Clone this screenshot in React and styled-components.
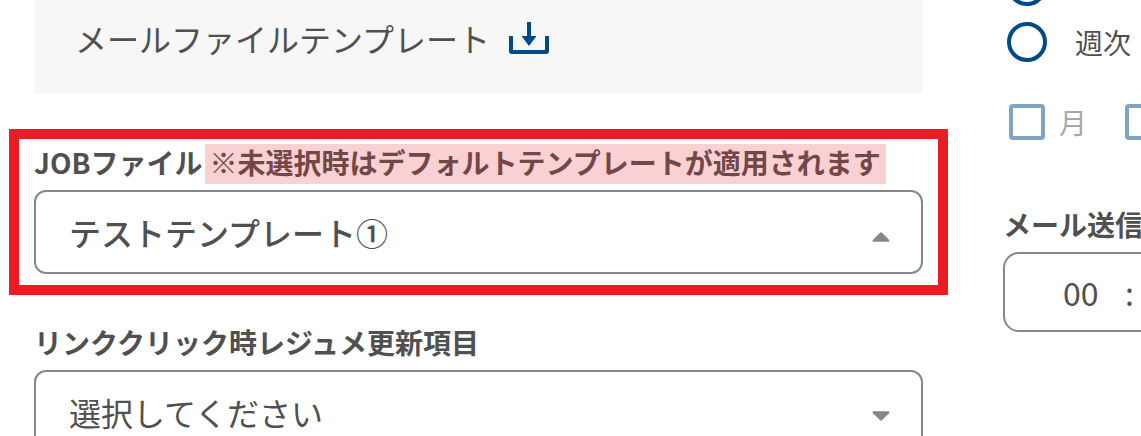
import React from "react";
import styled, { createGlobalStyle, ThemeProvider } from "styled-components";

const theme = {
  color: {
    text: "#505050",
    primary: "#004b87",
    border: "#878787",
    panel: "#f7f7f7",
    frame: "#ed1c24",
    mark: "#fad1d3",
    markText: "#734648",
  },
  fontSize: { m: "28px", l: "32px" },
};

const GlobalStyle = createGlobalStyle`
  * {
    box-sizing: border-box;
  }

  body {
    margin: 0;
    background: #fff;
    color: ${theme.color.text};
    font-family: "Noto Sans CJK JP", sans-serif;
    font-size: ${theme.fontSize.m};
    line-height: 36px;
  }

  select, button, input {
    margin: 0;
    padding: 0;
    color: inherit;
    font: inherit;
  }
`;

const Page = styled.main`
  display: grid;
  grid-template-columns: minmax(0, 34fr) minmax(0, 5fr);
  column-gap: 55px;
  height: 100vh;
  padding-left: 9px;
  overflow: hidden;
`;

const Side = styled.aside`
  overflow: hidden;
  white-space: nowrap;
`;

const Panel = styled.div`
  display: flex;
  align-items: center;
  gap: 19px;
  margin: 0 25px 35px;
  padding: 20px 41px 38px;
  background: ${({ theme: { color } }) => color.panel};
  font-size: ${({ theme: { fontSize } }) => fontSize.l};
`;

const DownloadButton = styled.button`
  display: flex;
  border: 0;
  background: none;
  color: ${({ theme: { color } }) => color.primary};
`;

const Frame = styled.div`
  padding: 5px 15px 11px;
  border: 10px solid ${({ theme: { color } }) => color.frame};
`;

const Section = styled.div`
  padding: 29px 25px;
`;

const FieldLabel = styled.label`
  display: flex;
  gap: 2px;
  height: 40px;
  margin-bottom: 6px;
  font-weight: 700;
  white-space: nowrap;
`;

const Note = styled.mark`
  padding: 0 5px;
  background: ${({ theme: { color } }) => color.mark};
  color: ${({ theme: { color } }) => color.markText};
`;

const SelectBox = styled.div`
  display: grid;
  align-items: center;

  > * {
    grid-area: 1 / 1;
  }

  svg {
    justify-self: end;
    margin-right: 33px;
    color: ${({ theme: { color } }) => color.border};
    pointer-events: none;
  }
`;

const Select = styled.select`
  width: 100%;
  height: 84px;
  padding: 0 60px 0 33px;
  border: 2px solid ${({ theme: { color } }) => color.border};
  border-radius: 12px;
  background: #fff;
  font-size: ${({ theme: { fontSize } }) => fontSize.l};
  font-weight: ${({ $filled }) => ($filled ? 500 : 400)};
  appearance: none;
`;

const RadioGroup = styled.div`
  display: grid;
  gap: 16px;
  margin: -34px 0 42px 4px;
`;

const RadioLabel = styled.label`
  display: flex;
  align-items: center;
  gap: 28px;
`;

const Radio = styled.input`
  flex: none;
  width: 40px;
  height: 40px;
  border: 4px solid ${({ theme: { color } }) => color.primary};
  border-radius: 50%;
  appearance: none;
`;

const Days = styled.div`
  display: flex;
  gap: 38px;
  margin: 0 0 66px 6px;
`;

const DayLabel = styled.label`
  display: flex;
  align-items: center;
  gap: 14px;
  height: 36px;
  opacity: 0.5;
`;

const Checkbox = styled.input`
  flex: none;
  width: 36px;
  height: 36px;
  border: 4px solid ${({ theme: { color } }) => color.primary};
  border-radius: 4px;
  appearance: none;
`;

const TimeBox = styled.div`
  display: flex;
  align-items: center;
  gap: 26px;
  width: 280px;
  height: 80px;
  padding-left: 58px;
  border: 2px solid ${({ theme: { color } }) => color.border};
  border-radius: 16px;
  font-size: ${({ theme: { fontSize } }) => fontSize.l};
`;

const TimeSelect = styled.select`
  border: 0;
  background: none;
  appearance: none;
`;

const DownloadIcon = () => (
  <svg width="40" height="32" viewBox="0 0 40 32" aria-hidden="true">
    <path
      d="M0 14h4v14h32V14h4v15a3 3 0 0 1-3 3H3a3 3 0 0 1-3-3z"
      fill="currentColor"
    />
    <path d="M18 0h4v14h5.500l-7.500 10l-7.500-10H18z" fill="currentColor" />
  </svg>
);

const Caret = ({ open }) => (
  <svg width="18" height="24" viewBox="0 0 18 24" aria-hidden="true">
    <path
      d={
        open
          ? "M8 12.800q1-.9 2 0l7 7q1.200 2-.7 2H1.700q-1.900 0-.7-2z"
          : "M8 20.200q1 .9 2 0l7-7q1.200-2-.7-2H1.700q-1.900 0-.7 2z"
      }
      fill="currentColor"
    />
  </svg>
);

function SelectField({ id, label, note, value, open, filled }) {
  return (
    <>
      <FieldLabel htmlFor={id}>
        {label}
        {note && <Note>{note}</Note>}
      </FieldLabel>
      <SelectBox>
        <Select id={id} $filled={filled}>
          <option>{value}</option>
        </Select>
        <Caret open={open} />
      </SelectBox>
    </>
  );
}

export default function App() {
  const cycles = ["日次", "週次"];
  const days = ["月", "火"];

  return (
    <ThemeProvider theme={theme}>
      <GlobalStyle />
      <Page>
        <div>
          <Panel>
            メールファイルテンプレート
            <DownloadButton type="button" aria-label="ダウンロード">
              <DownloadIcon />
            </DownloadButton>
          </Panel>
          <Frame>
            <SelectField
              id="job-file"
              label="JOBファイル"
              note="※未選択時はデフォルトテンプレートが適用されます"
              value="テストテンプレート①"
              open
              filled
            />
          </Frame>
          <Section>
            <SelectField
              id="resume-item"
              label="リンククリック時レジュメ更新項目"
              value="選択してください"
            />
          </Section>
        </div>
        <Side>
          <RadioGroup>
            {cycles.map((e) => (
              <RadioLabel key={e}>
                <Radio type="radio" name="cycle" />
                {e}
              </RadioLabel>
            ))}
          </RadioGroup>
          <Days>
            {days.map((e) => (
              <DayLabel key={e}>
                <Checkbox type="checkbox" disabled />
                {e}
              </DayLabel>
            ))}
          </Days>
          <FieldLabel htmlFor="send-hour">メール送信時間</FieldLabel>
          <TimeBox>
            <TimeSelect id="send-hour">
              <option>00</option>
            </TimeSelect>
            <span>:</span>
            <TimeSelect aria-label="分">
              <option>00</option>
            </TimeSelect>
          </TimeBox>
        </Side>
      </Page>
    </ThemeProvider>
  );
}
